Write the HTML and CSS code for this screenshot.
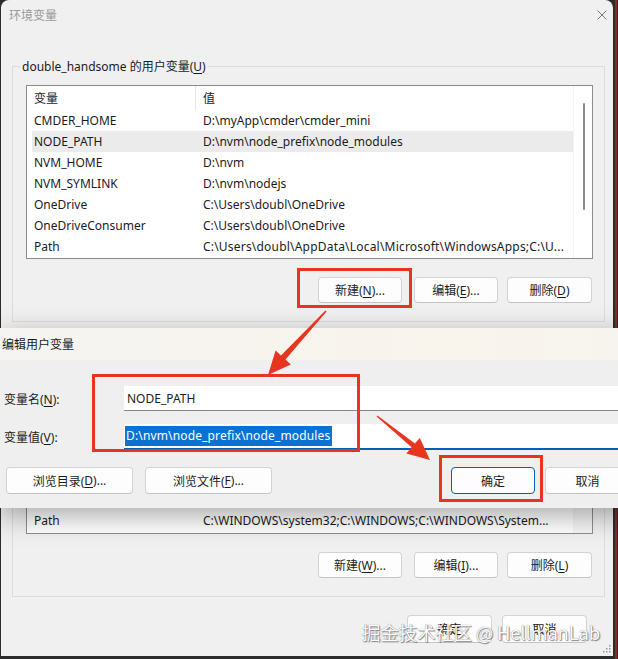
FILE: index.html
```html
<!DOCTYPE html>
<html lang="zh-CN">
<head>
<meta charset="utf-8">
<title>环境变量</title>
<link rel="stylesheet" href="styles.css">
</head>
<body>
<div class="screen">
  <div class="window">
    <div class="titlebar">
      <span class="title">环境变量</span>
      <svg class="close" viewBox="0 0 10 10" width="10" height="10"><path d="M0.5 0.5 L9.5 9.5 M9.5 0.5 L0.5 9.5" stroke="#7a7a7a" stroke-width="1" fill="none"/></svg>
    </div>

    <fieldset class="group user">
      <legend>double_handsome 的用户变量(<u>U</u>)</legend>
      <div class="listbox">
        <div class="list-main">
          <div class="row head"><span class="c1">变量</span><span class="c2">值</span></div>
          <div class="row"><span class="c1">CMDER_HOME</span><span class="c2">D:\myApp\cmder\cmder_mini</span></div>
          <div class="row sel"><span class="c1">NODE_PATH</span><span class="c2">D:\nvm\node_prefix\node_modules</span></div>
          <div class="row"><span class="c1">NVM_HOME</span><span class="c2">D:\nvm</span></div>
          <div class="row"><span class="c1">NVM_SYMLINK</span><span class="c2">D:\nvm\nodejs</span></div>
          <div class="row"><span class="c1">OneDrive</span><span class="c2">C:\Users\doubl\OneDrive</span></div>
          <div class="row"><span class="c1">OneDriveConsumer</span><span class="c2">C:\Users\doubl\OneDrive</span></div>
          <div class="row"><span class="c1">Path</span><span class="c2 long">C:\Users\doubl\AppData\Local\Microsoft\WindowsApps;C:\U...</span></div>
        </div>
        <div class="scroll"><div class="thumb"></div></div>
      </div>
      <div class="btnrow">
        <button class="btn">新建(<u>N</u>)...</button>
        <button class="btn">编辑(<u>E</u>)...</button>
        <button class="btn del">删除(<u>D</u>)</button>
      </div>
    </fieldset>

    <fieldset class="group sys">
      <legend>系统变量(<u>S</u>)</legend>
      <div class="listbox sys-list">
        <div class="list-main bottom">
          <div class="row"><span class="c1">NUMBER_OF_PROCESSORS</span><span class="c2">16</span></div>
          <div class="row"><span class="c1">OS</span><span class="c2">Windows_NT</span></div>
          <div class="row"><span class="c1">Path</span><span class="c2">C:\WINDOWS\system32;C:\WINDOWS;C:\WINDOWS\System...</span></div>
        </div>
        <div class="scroll gray"></div>
      </div>
      <div class="btnrow">
        <button class="btn">新建(<u>W</u>)...</button>
        <button class="btn">编辑(<u>I</u>)...</button>
        <button class="btn del">删除(<u>L</u>)</button>
      </div>
    </fieldset>

    <div class="footer">
      <button class="btn">确定</button>
      <button class="btn">取消</button>
    </div>
    <svg class="grip" viewBox="0 0 8 8" width="8" height="8"><g fill="#9a9a9a"><rect x="6" y="0" width="1.5" height="1.5"/><rect x="3" y="3" width="1.5" height="1.5"/><rect x="6" y="3" width="1.5" height="1.5"/><rect x="0" y="6" width="1.5" height="1.5"/><rect x="3" y="6" width="1.5" height="1.5"/><rect x="6" y="6" width="1.5" height="1.5"/></g></svg>
  </div>

  <div class="dialog">
    <div class="dlg-title">编辑用户变量</div>
    <div class="dlg-body">
      <div class="field">
        <label>变量名(<u>N</u>):</label>
        <div class="input">NODE_PATH</div>
      </div>
      <div class="field">
        <label>变量值(<u>V</u>):</label>
        <div class="input active"><span class="selected">D:\nvm\node_prefix\node_modules</span></div>
      </div>
      <div class="dlg-buttons">
        <button class="btn wide">浏览目录(<u>D</u>)...</button>
        <button class="btn wide">浏览文件(<u>F</u>)...</button>
        <button class="btn ok">确定</button>
        <button class="btn cancel">取消</button>
      </div>
    </div>
  </div>

  <div class="mark m-new"></div>
  <div class="mark m-inputs"></div>
  <div class="mark m-ok"></div>

  <svg class="arrows" width="618" height="659" viewBox="0 0 618 659">
    <polygon fill="#e8351f" points="326.6,311.4 285.5,359.6 290.8,364.6 268,375 275.6,350.6 281.0,355.6 325.4,310.6"/>
    <polygon fill="#e8351f" points="377.4,415.4 414.9,443.4 419.8,437.9 430,460 406.4,453.6 411.6,447.3 376.6,416.6"/>
  </svg>

  <div class="watermark">掘金技术社区 @ HellmanLab</div>
</div>
</body>
</html>
```

FILE: styles.css
```css
* { box-sizing: border-box; }
html, body { margin: 0; padding: 0; }
body {
  background: #2c2c2c;
  font-family: "Noto Sans", "Noto Sans CJK SC", sans-serif;
  font-size: 12px;
  color: #1b1b1b;
}
u { text-decoration: underline; text-underline-offset: 2px; }

.screen {
  position: relative;
  width: 618px;
  height: 659px;
  overflow: hidden;
  background: linear-gradient(to right, #2c2c2c 615px, #7a3128 615px, #7a3128 617px, #2c2c2c 617px);
}

.window {
  position: relative;
  width: 612px;
  height: 656px;
  margin-left: 1px;
  background: #f0f0f0;
  border-radius: 8px 8px 0 0;
  display: flex;
  flex-direction: column;
}

.titlebar {
  height: 31px;
  flex: none;
  display: flex;
  align-items: center;
  justify-content: space-between;
  padding: 0 6px 0 8px;
}
.title { color: #9a9a9a; font-size: 12px; line-height: 16px; }
.close { display: block; margin-top: -1px; }

.group {
  margin: 27px 8px 0 11px;
  border: 1px solid #dcdcdc;
  padding: 10px 11px 18px 13px;
  min-width: 0;
  flex: none;
}
.group.sys { margin-top: 10px; }
.group legend {
  padding: 0 2px;
  margin-left: -6px;
  line-height: 17px;
  font-size: 12px;
}

.listbox {
  display: flex;
  height: 174px;
  border: 1px solid #8d8d8d;
  background: #fff;
}
.sys-list { height: 175px; }
.list-main {
  flex: 1;
  min-width: 0;
  padding-left: 5px;
  overflow: hidden;
  display: flex;
  flex-direction: column;
}
.list-main.bottom { justify-content: flex-end; padding-bottom: 2px; }

.row {
  display: grid;
  grid-template-columns: 164px 1fr;
  height: 21px;
  flex: none;
  align-items: center;
  white-space: nowrap;
}
.row.head { height: 24px; }
.row.head .c1 { border-right: 1px solid #e6e6e6; align-self: stretch; display: flex; align-items: center; }
.row.sel { background: #ebebeb; }
.c1 { padding-left: 2px; overflow: hidden; }
.c2 { padding-left: 7px; overflow: hidden; }
.c2.long { letter-spacing: 0.2px; }

.scroll {
  width: 19px;
  flex: none;
  padding-top: 17px;
  border-left: 1px solid #f3f3f3;
}
.scroll.gray { background: #f6f6f6; }
.thumb {
  width: 2px;
  height: 107px;
  margin-left: 9px;
  background: #8a8a8a;
  border-radius: 1px;
}

.btnrow {
  display: flex;
  justify-content: flex-end;
  margin-top: 18px;
  padding-right: 1px;
}

.btn {
  width: 84px;
  height: 26px;
  padding: 0;
  background: #fdfdfd;
  border: 1px solid #d3d3d3;
  border-bottom-color: #c4c4c4;
  border-radius: 4px;
  font-family: "Noto Sans", "Noto Sans CJK SC", sans-serif;
  font-size: 12px;
  color: #1b1b1b;
  display: flex;
  align-items: center;
  justify-content: center;
}
.btnrow .btn + .btn { margin-left: 12px; }
.btnrow .btn.del { margin-left: 9px; width: 85px; }

.footer {
  display: flex;
  justify-content: flex-end;
  gap: 10px;
  margin-top: 18px;
  padding-right: 26px;
}
.footer .btn { width: 85px; height: 28px; }

.grip { position: absolute; right: 2px; bottom: 3px; }

/* overlay dialog */
.dialog {
  position: absolute;
  left: 0;
  top: 328px;
  width: 640px;
  height: 180px;
  background: #efefef;
  box-shadow: 0 8px 26px rgba(0, 0, 0, 0.34);
  display: flex;
  flex-direction: column;
}
.dlg-title {
  height: 32px;
  flex: none;
  background: linear-gradient(to right, #f5f4f2, #f9f4ec 70%, #f7f4ef);
  padding-left: 2px;
  display: flex;
  align-items: center;
  font-size: 12px;
}
.dlg-body {
  padding: 26px 10px 0 4px;
  display: flex;
  flex-direction: column;
}
.field {
  display: grid;
  grid-template-columns: 120px 1fr;
  align-items: center;
}
.field + .field { margin-top: 13px; }
.input {
  height: 25px;
  background: #fff;
  border-bottom: 1px solid #868686;
  padding-left: 3px;
  display: flex;
  align-items: center;
  white-space: nowrap;
}
.input.active {
  height: 26px;
  border-bottom: 2px solid #005fb8;
  padding-left: 1px;
}
.selected {
  background: #0a72d4;
  color: #fff;
  line-height: 20px;
  padding: 0 2px 0 1px;
  letter-spacing: 0.15px;
}

.dlg-buttons {
  display: flex;
  margin-top: 17px;
  padding-left: 2px;
}
.dlg-buttons .btn { height: 27px; }
.dlg-buttons .wide { width: 127px; }
.dlg-buttons .wide + .wide { margin-left: 12px; }
.dlg-buttons .ok {
  margin-left: auto;
  border: 1px solid #005fb8;
}
.dlg-buttons .cancel { margin-left: 10px; width: 85px; }

/* annotations */
.mark {
  position: absolute;
  border: 3px solid #e8351f;
}
.m-new { left: 297px; top: 268px; width: 115px; height: 40px; }
.m-inputs { left: 92px; top: 374px; width: 268px; height: 78px; }
.m-ok { left: 439px; top: 455px; width: 104px; height: 47px; }

.arrows { position: absolute; left: 0; top: 0; pointer-events: none; }

.watermark {
  position: absolute;
  right: 18px;
  top: 619px;
  font-family: "Noto Sans CJK SC", "Noto Sans", sans-serif;
  font-size: 18.5px;
  line-height: 26px;
  letter-spacing: -0.2px;
  color: #fbfbfb;
  white-space: nowrap;
  text-shadow: 0 0 1px #6a6a6a, 1px 1px 1px rgba(0, 0, 0, 0.45);
}
```
